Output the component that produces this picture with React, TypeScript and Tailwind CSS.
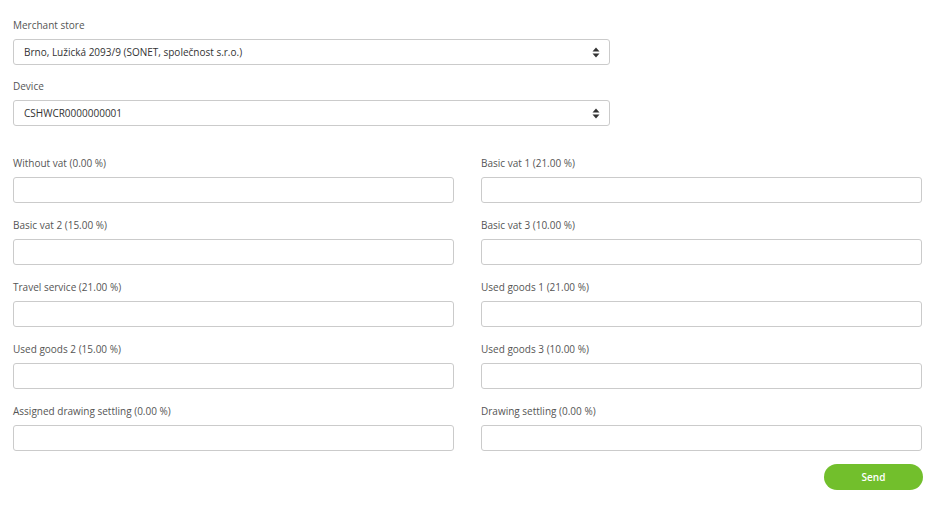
const vatFields = [
  "Without vat (0.00 %)",
  "Basic vat 1 (21.00 %)",
  "Basic vat 2 (15.00 %)",
  "Basic vat 3 (10.00 %)",
  "Travel service (21.00 %)",
  "Used goods 1 (21.00 %)",
  "Used goods 2 (15.00 %)",
  "Used goods 3 (10.00 %)",
  "Assigned drawing settling (0.00 %)",
  "Drawing settling (0.00 %)",
];

function SortIcon() {
  return (
    <svg width="8" height="11" viewBox="0 0 8 11" fill="#333">
      <path d="M4 0.5L7.5 4.5H0.5Z" />
      <path d="M4 10.5L7.5 6.5H0.5Z" />
    </svg>
  );
}

function SelectField({ label, value }: { label: string; value: string }) {
  return (
    <div className="flex flex-col">
      <label className="text-[10px] leading-[14px] text-[#555] mb-[7px]">{label}</label>
      <div className="h-[26px] flex items-center justify-between border border-[#cbcbcb] rounded-[3px] pl-[10px] pr-[9px] bg-white">
        <span className="text-[10px] text-[#333]">{value}</span>
        <SortIcon />
      </div>
    </div>
  );
}

export default function App() {
  return (
    <div
      className="w-[952px] h-[532px] bg-white px-[13px] pt-[18px]"
      style={{ fontFamily: '"Open Sans", "Noto Sans", sans-serif' }}
    >
      <div className="w-[597px] flex flex-col gap-[14px]">
        <SelectField label="Merchant store" value="Brno, Lužická 2093/9 (SONET, společnost s.r.o.)" />
        <SelectField label="Device" value="CSHWCR0000000001" />
      </div>

      <div className="w-[909px] grid grid-cols-2 gap-x-[27px] gap-y-[15px] mt-[30px]">
        {vatFields.map((f) => (
          <div key={f} className="flex flex-col">
            <label className="text-[10px] leading-[14px] text-[#555] mb-[7px]">{f}</label>
            <input className="h-[26px] border border-[#cbcbcb] rounded-[3px] bg-white outline-none" />
          </div>
        ))}
      </div>

      <div className="w-[910px] flex justify-end mt-[13px]">
        <button className="w-[99px] h-[26px] rounded-full bg-[#72bf2c] text-white text-[10px] font-semibold">
          Send
        </button>
      </div>
    </div>
  );
}
